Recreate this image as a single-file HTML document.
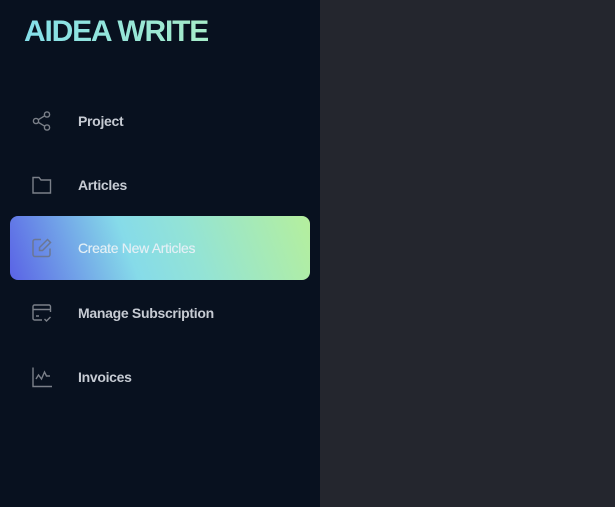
<!DOCTYPE html>
<html><head><meta charset="utf-8"><style>
*{margin:0;padding:0;box-sizing:border-box}
body{width:615px;height:507px;background:#24262e;font-family:"Liberation Sans",sans-serif;overflow:hidden;position:relative}
.side{position:absolute;left:0;top:0;width:320px;height:507px;background:#08111f}
.logo{position:absolute;left:24px;top:15px;font-size:30px;font-weight:bold;letter-spacing:-1.2px;background:linear-gradient(90deg,#84dfea,#a6ecc9);-webkit-background-clip:text;background-clip:text;color:transparent}
.item{position:absolute;left:10px;width:300px;height:64px;border-radius:8px}
.item svg{position:absolute;left:21px;top:21px}
.item span{position:absolute;left:68px;top:24px;font-size:14px;font-weight:bold;color:#c6cbd3;letter-spacing:-0.3px}
.active{background:linear-gradient(70deg,#5a63e6 0%,#86dbe9 40%,#93e3d6 60%,#b5ef9d 100%)}
.active span{color:#e3eff5;font-weight:normal;text-shadow:0 0 0.4px #e3eff5}
</style></head><body>
<div class="side">
<div class="logo">AIDEA WRITE</div>
<div class="item" style="top:89px"><svg width="22" height="22" viewBox="0 0 22 22" fill="none" stroke="#7b8089" stroke-width="1.4"><circle cx="16" cy="4.5" r="2.6"/><circle cx="5" cy="11" r="2.6"/><circle cx="16" cy="17.5" r="2.6"/><path d="M7.3 9.7L13.7 5.8M7.3 12.3L13.7 16.2"/></svg><span>Project</span></div>
<div class="item" style="top:153px"><svg width="22" height="22" viewBox="0 0 22 22" fill="none" stroke="#7b8089" stroke-width="1.4"><path d="M2 3.5h6l2 2.5h9.5v13H2z"/></svg><span>Articles</span></div>
<div class="item active" style="top:216px"><svg width="22" height="22" viewBox="0 0 22 22" fill="none" stroke="#6b7794" stroke-width="1.5"><path d="M10 2.5H4a2 2 0 0 0-2 2v13a2 2 0 0 0 2 2h13a2 2 0 0 0 2-2v-6"/><path d="M16.5 2.5l3 3-8 8H8.5v-3z"/></svg><span>Create New Articles</span></div>
<div class="item" style="top:281px"><svg width="22" height="22" viewBox="0 0 22 22" fill="none" stroke="#7b8089" stroke-width="1.4"><path d="M19.5 10V4.5a1.5 1.5 0 0 0-1.5-1.5H3.5A1.5 1.5 0 0 0 2 4.5v12A1.5 1.5 0 0 0 3.5 18H11"/><path d="M2 7.5h17.5M5 14h3M13.5 17l2 2 4-4"/></svg><span>Manage Subscription</span></div>
<div class="item" style="top:345px"><svg width="22" height="22" viewBox="0 0 22 22" fill="none" stroke="#7b8089" stroke-width="1.4"><path d="M2 1.5v19h19"/><path d="M5 13l2.5-4 3 4 3-7 2 4h3.5"/></svg><span>Invoices</span></div>
</div>
</body></html>
